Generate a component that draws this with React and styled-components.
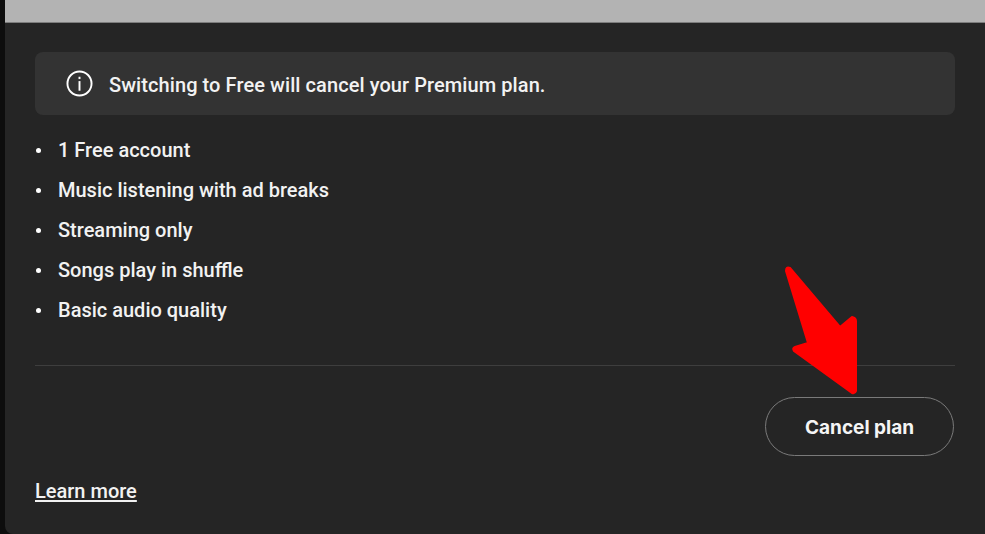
import styled, { createGlobalStyle } from 'styled-components';

const plans = [
  '1 Free account',
  'Music listening with ad breaks',
  'Streaming only',
  'Songs play in shuffle',
  'Basic audio quality'
];

const App = () => (
  <>
    <GlobalStyle />
    <Page>
      <Panel>
        <TopBar />
        <Content>
          <Notice>
            <InfoIcon viewBox="0 0 28 28" aria-hidden="true">
              <circle cx="14" cy="14" r="12.5" fill="none" stroke="#fff" strokeWidth="2" />
              <rect x="13" y="11.5" width="2" height="10" fill="#fff" />
              <rect x="13" y="7" width="2" height="2.4" fill="#fff" />
            </InfoIcon>
            <NoticeText>Switching to Free will cancel your Premium plan.</NoticeText>
          </Notice>
          <FeatureList>
            {plans.map((item) => (
              <FeatureItem key={item}>{item}</FeatureItem>
            ))}
          </FeatureList>
          <Divider />
          <Actions>
            <CancelButton type="button">Cancel plan</CancelButton>
          </Actions>
          <LearnMore href="#">Learn more</LearnMore>
        </Content>
        <Arrow viewBox="0 0 80 136" aria-hidden="true">
          <path
            d="M7 5 L57 64 L69 54 Q73 55 73 58 L73 128 Q72 131 69 130 L11 88 Q9 85 12 84 L25 80 L3 8 Q3 3 7 5 Z"
            fill="#ff0000"
            stroke="#ff0000"
            strokeWidth="2"
            strokeLinejoin="round"
          />
        </Arrow>
      </Panel>
    </Page>
  </>
);

const GlobalStyle = createGlobalStyle`
  html, body {
    margin: 0;
    padding: 0;
    background: #0d0d0d;
  }

  * {
    box-sizing: border-box;
  }
`;

const Page = styled.div`
  width: 985px;
  height: 534px;
  padding-left: 5px;
  overflow: hidden;
  background: #0d0d0d;
  font-family: Roboto, 'Liberation Sans', sans-serif;
  color: #fff;
`;

const Panel = styled.div`
  position: relative;
  height: 100%;
  background: #252525;
  border-bottom-left-radius: 8px;
`;

const TopBar = styled.div`
  height: 23px;
  background: #b3b3b3;
  border-bottom: 1px solid #7d7d7d;
`;

const Content = styled.div`
  padding: 29px 30px 0;
`;

const Notice = styled.div`
  display: flex;
  align-items: center;
  gap: 16px;
  height: 63px;
  padding: 0 0 1px 31px;
  background: #333333;
  border-radius: 8px;
`;

const InfoIcon = styled.svg`
  width: 27px;
  height: 27px;
  flex-shrink: 0;
`;

const NoticeText = styled.span`
  padding-top: 4px;
  font-size: 20px;
  font-weight: 500;
  letter-spacing: 0.08px;
  color: #f2f2f2;
`;

const FeatureList = styled.ul`
  list-style: none;
  margin: 15px 0 0;
  padding: 0;
`;

const FeatureItem = styled.li`
  position: relative;
  height: 40px;
  padding-left: 23px;
  font-size: 20px;
  font-weight: 500;
  line-height: 40px;
  color: #f2f2f2;

  &::before {
    content: '';
    position: absolute;
    left: 1px;
    top: 18px;
    width: 5px;
    height: 5px;
    border-radius: 50%;
    background: #fff;
  }
`;

const Divider = styled.hr`
  margin: 35px 0 0;
  border: 0;
  border-top: 1px solid #3e3e3e;
`;

const Actions = styled.div`
  display: flex;
  justify-content: flex-end;
  margin-top: 31px;
`;

const CancelButton = styled.button`
  width: 189px;
  height: 59px;
  margin-right: 1px;
  padding: 2px 0 0;
  background: transparent;
  border: 1px solid #7a7a7a;
  border-radius: 30px;
  font-family: Inter, 'Liberation Sans', sans-serif;
  font-size: 19px;
  font-weight: 700;
  color: #f5f5f5;
`;

const LearnMore = styled.a`
  display: inline-block;
  margin-top: 23px;
  font-size: 20px;
  font-weight: 500;
  color: #f2f2f2;
  text-decoration: underline;
  text-underline-offset: 2px;
`;

const Arrow = styled.svg`
  position: absolute;
  left: 778px;
  top: 263px;
  width: 80px;
  height: 136px;
`;

export default App;
